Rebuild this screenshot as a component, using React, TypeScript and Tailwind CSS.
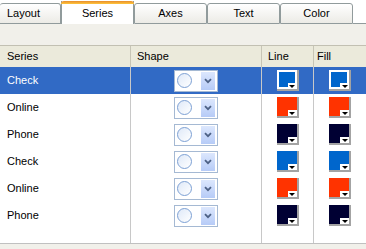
import React from "react";

type Row = { name: string; color: string };

const rows: Row[] = [
  { name: "Check", color: "#0066cc" },
  { name: "Online", color: "#ff3300" },
  { name: "Phone", color: "#000033" },
  { name: "Check", color: "#0066cc" },
  { name: "Online", color: "#ff3300" },
  { name: "Phone", color: "#000033" },
];

const tabs = ["Layout", "Series", "Axes", "Text", "Color"];

function Tab({ label, active, first }: { label: string; active: boolean; first?: boolean }) {
  if (active) {
    return (
      <div className="relative h-[23px] w-[73px] shrink-0 border-x border-[#919b9c] bg-white flex items-center justify-center pt-[2px]">
        <div className="absolute left-[-1px] right-[-1px] top-0 h-[3px] rounded-t-[3px] bg-gradient-to-b from-[#e68b2c] to-[#ffc73c]" />
        <span>{label}</span>
      </div>
    );
  }
  return (
    <div
      className={
        "h-[21px] shrink-0 border border-[#919b9c] rounded-t-[3px] bg-gradient-to-b from-white to-[#ecebe6] flex items-center " +
        (first ? "w-[61px] justify-start pl-[7px] border-l-0" : "w-[73px] justify-center")
      }
    >
      {label}
    </div>
  );
}

function ShapeCombo() {
  return (
    <div className="flex h-[22px] w-[44px] items-center border border-[#a5b9d3] bg-white pl-[2px] pr-[2px]">
      <div className="h-[15px] w-[15px] rounded-full border border-[#7ca0d4] bg-gradient-to-br from-[#dfe9f8] to-white" />
      <div className="ml-auto flex h-[18px] w-[14px] items-center justify-center bg-gradient-to-b from-[#dce7fd] to-[#b6cbf7]">
        <svg width="8" height="6" viewBox="0 0 8 6">
          <path d="M1 1.2 L4 4.2 L7 1.2" fill="none" stroke="#4d6185" strokeWidth="1.8" />
        </svg>
      </div>
    </div>
  );
}

function Swatch({ color, selected }: { color: string; selected: boolean }) {
  return (
    <div
      className={
        "relative h-[21px] w-[22px] border-b-2 border-r-2 border-[#a3a3a3] " +
        (selected ? "bg-white p-[2px]" : "")
      }
    >
      <div className="h-full w-full" style={{ backgroundColor: color }} />
      <div className="absolute bottom-0 right-0 flex h-[6px] w-[9px] items-center justify-center bg-white">
        <div className="h-0 w-0 border-x-[3px] border-t-[3px] border-x-transparent border-t-black" />
      </div>
    </div>
  );
}

export default function App() {
  return (
    <div
      className="flex h-[249px] w-[366px] flex-col overflow-hidden bg-white text-[11px] text-black"
      style={{ fontFamily: '"Liberation Sans", Arial, sans-serif' }}
    >
      {/* tabs */}
      <div className="flex h-[24px] items-end">
        {tabs.map((t, i) => (
          <Tab key={t + i} label={t} active={t === "Series"} first={i === 0} />
        ))}
        <div className="h-[1px] flex-1 bg-[#919b9c]" />
      </div>

      <div className="h-[21px] bg-[#f1f0ea]" />

      {/* header */}
      <div className="grid h-[22px] grid-cols-[131px_131px_52px_52px] border-t border-[#c2c0b2] bg-[#ebeadb]">
        <div className="flex items-center border-r border-[#c7c5b6] pl-[7px]">Series</div>
        <div className="flex items-center border-r border-[#c7c5b6] pl-[6px]">Shape</div>
        <div className="flex items-center border-r border-[#c7c5b6] pl-[6px]">Line</div>
        <div className="flex items-center pl-[3px]">Fill</div>
      </div>

      {/* body */}
      <div className="flex flex-1 flex-col">
        {rows.map((r, i) => {
          const sel = i === 0;
          return (
            <div
              key={i}
              className={
                "grid h-[27px] grid-cols-[131px_131px_52px_52px] " +
                (sel ? "bg-[#316ac5] text-white" : "")
              }
            >
              <div className="flex items-center border-r border-[#c8c8c8] pl-[7px]">{r.name}</div>
              <div className="flex items-center justify-center border-r border-[#c8c8c8]">
                <ShapeCombo />
              </div>
              <div className="flex items-center justify-center border-r border-[#c8c8c8]">
                <Swatch color={r.color} selected={sel} />
              </div>
              <div className="flex items-center justify-center">
                <Swatch color={r.color} selected={sel} />
              </div>
            </div>
          );
        })}
        <div className="grid flex-1 grid-cols-[131px_131px_52px_52px]">
          <div className="border-r border-[#c8c8c8]" />
          <div className="border-r border-[#c8c8c8]" />
          <div className="border-r border-[#c8c8c8]" />
          <div />
        </div>
      </div>

      <div className="h-[6px] border-t border-[#c0c0c0] bg-[#f1f0ea]" />
    </div>
  );
}
